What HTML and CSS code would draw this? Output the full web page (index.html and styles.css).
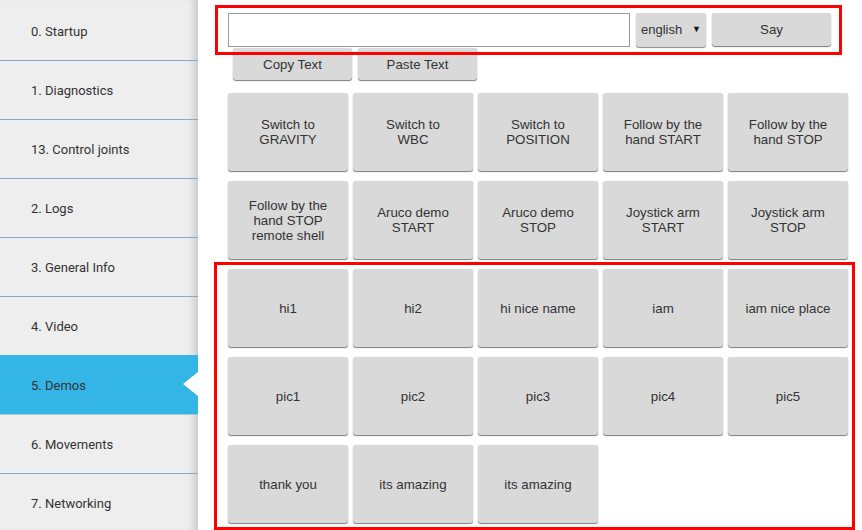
FILE: index.html
```html
<!DOCTYPE html>
<html>
<head>
<meta charset="utf-8">
<link rel="stylesheet" href="styles.css">
</head>
<body>
<nav class="sidebar">
  <div class="nav-item">0. Startup</div>
  <div class="nav-item">1. Diagnostics</div>
  <div class="nav-item">13. Control joints</div>
  <div class="nav-item">2. Logs</div>
  <div class="nav-item">3. General Info</div>
  <div class="nav-item">4. Video</div>
  <div class="nav-item active">5. Demos<span class="arrow"></span></div>
  <div class="nav-item">6. Movements</div>
  <div class="nav-item">7. Networking</div>
</nav>
<main class="main">
  <div class="say-row">
    <input class="say-input" type="text">
    <div class="select">english <span class="caret">▼</span></div>
    <button class="btn say-btn">Say</button>
  </div>
  <div class="clip-row">
    <button class="btn clip-btn">Copy Text</button>
    <button class="btn clip-btn">Paste Text</button>
  </div>
  <div class="grid">
    <button class="btn tile">Switch to<br>GRAVITY</button>
    <button class="btn tile">Switch to<br>WBC</button>
    <button class="btn tile">Switch to<br>POSITION</button>
    <button class="btn tile">Follow by the<br>hand START</button>
    <button class="btn tile">Follow by the<br>hand STOP</button>
    <button class="btn tile">Follow by the<br>hand STOP<br>remote shell</button>
    <button class="btn tile">Aruco demo<br>START</button>
    <button class="btn tile">Aruco demo<br>STOP</button>
    <button class="btn tile">Joystick arm<br>START</button>
    <button class="btn tile">Joystick arm<br>STOP</button>
    <button class="btn tile">hi1</button>
    <button class="btn tile">hi2</button>
    <button class="btn tile">hi nice name</button>
    <button class="btn tile">iam</button>
    <button class="btn tile">iam nice place</button>
    <button class="btn tile">pic1</button>
    <button class="btn tile">pic2</button>
    <button class="btn tile">pic3</button>
    <button class="btn tile">pic4</button>
    <button class="btn tile">pic5</button>
    <button class="btn tile">thank you</button>
    <button class="btn tile">its amazing</button>
    <button class="btn tile">its amazing</button>
  </div>
</main>
<div class="mark mark-top"></div>
<div class="mark mark-bottom"></div>
</body>
</html>
```
FILE: styles.css
```css
html, body {
  margin: 0;
  padding: 0;
  height: 530px;
  overflow: hidden;
  background: #ffffff;
}
body {
  display: flex;
  position: relative;
}
.sidebar {
  width: 198px;
  flex: none;
  height: 530px;
  padding-top: 2px;
  box-sizing: border-box;
  background: #eeeeee;
  box-shadow: inset -9px 0 8px -6px rgba(0, 0, 0, 0.18);
}
.nav-item {
  position: relative;
  height: 58px;
  border-bottom: 1px solid #86aac4;
  display: flex;
  align-items: center;
  padding-left: 31px;
  font-family: Roboto, "Liberation Sans", sans-serif;
  font-size: 13px;
  color: #333333;
}
.nav-item.active {
  background: #33b5e5;
  border-bottom-color: #a9c7d8;
  margin-top: -1px;
  padding-top: 1px;
}
.arrow {
  position: absolute;
  right: 0;
  top: 17px;
  width: 0;
  height: 0;
  border-top: 12px solid transparent;
  border-bottom: 12px solid transparent;
  border-right: 15px solid #ffffff;
}
.main {
  flex: 1;
  padding: 13px 0 0 30px;
  font-family: "Liberation Sans", Arial, sans-serif;
  font-size: 13px;
  color: #333333;
}
.say-row {
  display: flex;
  gap: 6px;
  height: 34px;
}
.say-input {
  width: 402px;
  height: 34px;
  box-sizing: border-box;
  border: 1px solid #9a9a9a;
  margin: 0;
  padding: 0 6px;
  background: #fff;
}
.select {
  width: 70px;
  height: 34px;
  box-sizing: border-box;
  background: #d9d9d9;
  border-radius: 3px;
  box-shadow: 0 1px 1px rgba(0, 0, 0, 0.45), 0 0 1px rgba(0, 0, 0, 0.2);
  display: flex;
  align-items: center;
  justify-content: space-between;
  padding: 0 5px 2px 5px;
  font-size: 13px;
}
.caret {
  font-size: 9px;
  color: #111;
}
.btn {
  margin: 0;
  border: none;
  background: #d9d9d9;
  border-radius: 3px;
  box-shadow: 0 1px 1px rgba(0, 0, 0, 0.5), 0 0 1px rgba(0, 0, 0, 0.2);
  font-family: "Liberation Sans", Arial, sans-serif;
  font-size: 13.3px;
  line-height: 15px;
  color: #333333;
  padding: 0;
  text-align: center;
}
.say-btn {
  width: 119px;
  height: 33px;
}
.clip-row {
  display: flex;
  gap: 6px;
  margin-top: 1px;
  padding-left: 5px;
}
.clip-btn {
  width: 119px;
  height: 32px;
}
.grid {
  display: grid;
  grid-template-columns: repeat(5, 120px);
  grid-auto-rows: 78px;
  column-gap: 5px;
  row-gap: 10px;
  margin-top: 13px;
}
.tile {
  width: 120px;
  height: 78px;
}
.mark {
  position: absolute;
  border: 3px solid #ff0000;
  box-sizing: border-box;
  pointer-events: none;
}
.mark-top {
  left: 215px;
  top: 5px;
  width: 627px;
  height: 50px;
}
.mark-bottom {
  left: 214px;
  top: 262px;
  width: 641px;
  height: 268px;
}
```
